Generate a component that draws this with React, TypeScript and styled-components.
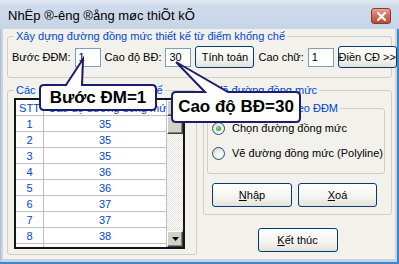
import React from "react";
import styled, { createGlobalStyle } from "styled-components";

const GlobalStyle = createGlobalStyle`
  html, body {
    margin: 0;
    padding: 0;
    background: #ffffff;
  }
  body {
    font-family: "Liberation Sans", Arial, sans-serif;
    font-size: 11px;
  }
`;

const Window = styled.div`
  position: relative;
  width: 399px;
  height: 264px;
  display: flex;
  flex-direction: column;
  background: #c7d4e6;
  box-shadow: inset -2px -2px 0 #3d87c8, inset 1px 1px 0 #a9bdd8;
  overflow: hidden;
`;

const TitleBar = styled.div`
  height: 29px;
  flex: none;
  display: flex;
  align-items: center;
  justify-content: space-between;
  padding: 0 8px 0 8px;
  background: linear-gradient(#e3eaf4 0%, #cfdbeb 20%, #c6d4e7 100%);
`;

const Title = styled.span`
  font-size: 13px;
  color: #000;
  padding-top: 2px;
`;

const CloseButton = styled.div`
  width: 20px;
  height: 16px;
  margin-top: 3px;
  display: flex;
  align-items: center;
  justify-content: center;
  border: 1px solid #8a3b30;
  border-radius: 3px;
  background: linear-gradient(#e8a595 0%, #d2705e 45%, #bd4b38 100%);
  box-sizing: border-box;
`;

const Body = styled.div`
  flex: 1;
  margin: 0 4px 5px 3px;
  padding: 1px 3px 0 4px;
  background: #f2f1eb;
  display: flex;
  flex-direction: column;
  gap: 6px;
`;

const Group = styled.fieldset`
  margin: 0;
  padding: 0;
  min-width: 0;
  border: 1px solid #d0d0bf;
  border-radius: 3px;
  box-sizing: border-box;
`;

const Legend = styled.legend`
  margin-left: 6px;
  padding: 0 2px;
  color: #0046d5;
  font-size: 11px;
  line-height: 13px;
`;

const TopRow = styled.div`
  height: 28px;
  padding: 0 0 6px 4px;
  display: flex;
  align-items: center;
  gap: 4px;
  color: #000;
`;

const Label = styled.span`
  white-space: nowrap;
`;

const Input = styled.div`
  width: 26px;
  height: 19px;
  flex: none;
  box-sizing: border-box;
  border: 1px solid #7f9db9;
  background: #fff;
  padding: 0 3px;
  display: flex;
  align-items: center;
  font-size: 11px;
`;

const Button = styled.div<{ $w: number; $h?: number }>`
  width: ${(p) => p.$w}px;
  height: ${(p) => p.$h ?? 22}px;
  flex: none;
  box-sizing: border-box;
  border: 1px solid #003c74;
  border-radius: 3px;
  background: linear-gradient(#ffffff 0%, #f4f4f0 60%, #e3e1d8 100%);
  display: flex;
  align-items: center;
  justify-content: center;
  color: #000;
  font-size: 11px;
  white-space: nowrap;
`;

const Middle = styled.div`
  display: flex;
  gap: 6px;
  height: 171px;
`;

const LeftGroup = styled(Group)`
  width: 190px;
  height: 171px;
  flex: none;
`;

const GridWrap = styled.div`
  margin: 1px 11px 5px 6px;
  height: 151px;
  display: flex;
  border: 2px solid #151515;
  box-sizing: border-box;
  background: #fff;
`;

const DataArea = styled.div`
  flex: 1;
  overflow: hidden;
`;

const Row = styled.div`
  display: grid;
  grid-template-columns: 28px 1fr;
  height: 16px;
`;

const Cell = styled.div<{ $left?: boolean }>`
  border-right: 1px solid #c0c0c0;
  border-bottom: 1px solid #c0c0c0;
  box-sizing: border-box;
  display: flex;
  align-items: center;
  justify-content: ${(p) => (p.$left ? "flex-start" : "center")};
  padding-left: ${(p) => (p.$left ? 4 : 0)}px;
  color: #0046d5;
  font-size: 11px;
  white-space: nowrap;
  overflow: hidden;
`;

const ScrollBar = styled.div`
  width: 16px;
  flex: none;
  display: flex;
  flex-direction: column;
`;

const ScrollButton = styled.div<{ $h: number }>`
  height: ${(p) => p.$h}px;
  box-sizing: border-box;
  background: #d4d0c8;
  border: 1px solid;
  border-color: #ffffff #404040 #404040 #ffffff;
  box-shadow: inset -1px -1px 0 #808080;
  display: flex;
  align-items: center;
  justify-content: center;
`;

const Track = styled.div`
  flex: 1;
  background-color: #ffffff;
  background-image: repeating-conic-gradient(#e4e2dc 0 25%, #ffffff 0 50%);
  background-size: 2px 2px;
`;

const RightCol = styled.div`
  width: 189px;
  flex: none;
  display: flex;
  flex-direction: column;
  align-items: center;
`;

const RightGroup = styled(Group)`
  width: 189px;
  height: 131px;
  padding: 0 6px 7px 3px;
`;

const InnerGroup = styled(Group)`
  margin-top: 5px;
  height: 72px;
  padding: 4px 0 11px 4px;
  display: flex;
  flex-direction: column;
  gap: 7px;
`;

const RadioRow = styled.div`
  height: 18px;
  display: flex;
  align-items: center;
  gap: 7px;
  font-size: 11px;
  color: #000;
  white-space: nowrap;
`;

const RadioCircle = styled.div<{ $on?: boolean }>`
  width: 13px;
  height: 13px;
  flex: none;
  box-sizing: border-box;
  border-radius: 50%;
  border: 1px solid #1c5180;
  background: radial-gradient(circle at 65% 65%, #ffffff 0%, #f1f0ea 40%, #d7d4c8 100%);
  display: flex;
  align-items: center;
  justify-content: center;
  &::after {
    content: "";
    display: ${(p) => (p.$on ? "block" : "none")};
    width: 5px;
    height: 5px;
    border-radius: 50%;
    background: radial-gradient(circle at 40% 40%, #8fe08a 0%, #3fae38 60%, #21891d 100%);
  }
`;

const ButtonRow = styled.div`
  margin-top: 9px;
  padding-left: 5px;
  display: flex;
  gap: 6px;
`;

const EndButton = styled(Button)`
  margin-top: 13px;
`;

const Callout = styled.div<{ $x: number; $y: number; $w: number; $h: number }>`
  position: absolute;
  left: ${(p) => p.$x}px;
  top: ${(p) => p.$y}px;
  width: ${(p) => p.$w}px;
  height: ${(p) => p.$h}px;
  display: flex;
  align-items: center;
  justify-content: center;
  z-index: 2;
`;

const CalloutShape = styled.svg`
  position: absolute;
  left: 0;
  top: 0;
  width: 100%;
  height: 100%;
  overflow: visible;
`;

const CalloutText = styled.span`
  position: relative;
  font-family: "Liberation Sans", Arial, sans-serif;
  font-weight: bold;
  font-size: 17px;
  color: #000;
  white-space: nowrap;
`;

const bubble = (w: number, h: number, b1: number, b2: number, ax: number, ay: number) =>
  `M4,0 L${b1},0 L${ax},${ay} L${b2},0 L${w - 4},0 Q${w},0 ${w},4 L${w},${h - 4} Q${w},${h} ${w - 4},${h} L4,${h} Q0,${h} 0,${h - 4} L0,4 Q0,0 4,0 Z`;

const rows = [
  ["1", "35"],
  ["2", "35"],
  ["3", "35"],
  ["4", "36"],
  ["5", "36"],
  ["6", "37"],
  ["7", "37"],
  ["8", "38"],
  ["", ""],
];

const Arrow = ({ up }: { up?: boolean }) => (
  <svg width="7" height="4" viewBox="0 0 7 4">
    <path d={up ? "M3.5,0 L7,4 L0,4 Z" : "M0,0 L7,0 L3.5,4 Z"} fill="#000" />
  </svg>
);

const App = () => {
  return (
    <Window>
      <GlobalStyle />
      <TitleBar>
        <Title>NhËp ®-êng ®ång møc thiÕt kÕ</Title>
        <CloseButton>
          <svg width="9" height="9" viewBox="0 0 9 9">
            <path d="M1,1 L8,8 M8,1 L1,8" stroke="#ffffff" strokeWidth="2.2" strokeLinecap="square" />
          </svg>
        </CloseButton>
      </TitleBar>
      <Body>
        <Group>
          <Legend>Xây dựng đường đồng mức thiết kế từ điểm khống chế</Legend>
          <TopRow>
            <Label>Bước ĐĐM:</Label>
            <Input>1</Input>
            <Label>Cao độ BĐ:</Label>
            <Input>30</Input>
            <Button $w={59}>Tính toán</Button>
            <Label>Cao chữ:</Label>
            <Input>1</Input>
            <Button $w={59}>Điền CĐ &gt;&gt;</Button>
          </TopRow>
        </Group>
        <Middle>
          <LeftGroup>
            <Legend>Các đường đồng mức thiết kế</Legend>
            <GridWrap>
              <DataArea>
                <Row>
                  <Cell>STT</Cell>
                  <Cell $left>Cao độ đường đồng mức</Cell>
                </Row>
                {rows.map(([n, v], i) => (
                  <Row key={i}>
                    <Cell>{n}</Cell>
                    <Cell>{v}</Cell>
                  </Row>
                ))}
              </DataArea>
              <ScrollBar>
                <ScrollButton $h={16}>
                  <Arrow up />
                </ScrollButton>
                <ScrollButton $h={18} />
                <Track />
                <ScrollButton $h={16}>
                  <Arrow />
                </ScrollButton>
              </ScrollBar>
            </GridWrap>
          </LeftGroup>
          <RightCol>
            <RightGroup>
              <Legend>Vẽ đường đồng mức</Legend>
              <InnerGroup>
                <Legend>Cách thức vẽ theo ĐĐM</Legend>
                <RadioRow>
                  <RadioCircle $on />
                  Chọn đường đồng mức
                </RadioRow>
                <RadioRow>
                  <RadioCircle />
                  Vẽ đường đồng mức (Polyline)
                </RadioRow>
              </InnerGroup>
              <ButtonRow>
                <Button $w={80} $h={24}>
                  <u>N</u>hập
                </Button>
                <Button $w={79} $h={24}>
                  <u>X</u>oá
                </Button>
              </ButtonRow>
            </RightGroup>
            <EndButton $w={80} $h={24}>
              <u>K</u>ết thúc
            </EndButton>
          </RightCol>
        </Middle>
      </Body>

      <Callout $x={40} $y={85} $w={116} $h={25}>
        <CalloutShape>
          <path d={bubble(116, 25, 26, 42, 43, -26)} fill="#ffffff" stroke="#1c1c6e" strokeWidth="2" />
        </CalloutShape>
        <CalloutText>Bước ĐM=1</CalloutText>
      </Callout>
      <Callout $x={172} $y={92} $w={128} $h={30}>
        <CalloutShape>
          <path d={bubble(128, 30, 33, 56, 4, -30)} fill="#ffffff" stroke="#1c1c6e" strokeWidth="2" />
        </CalloutShape>
        <CalloutText>Cao độ BĐ=30</CalloutText>
      </Callout>
    </Window>
  );
};

export default App;
